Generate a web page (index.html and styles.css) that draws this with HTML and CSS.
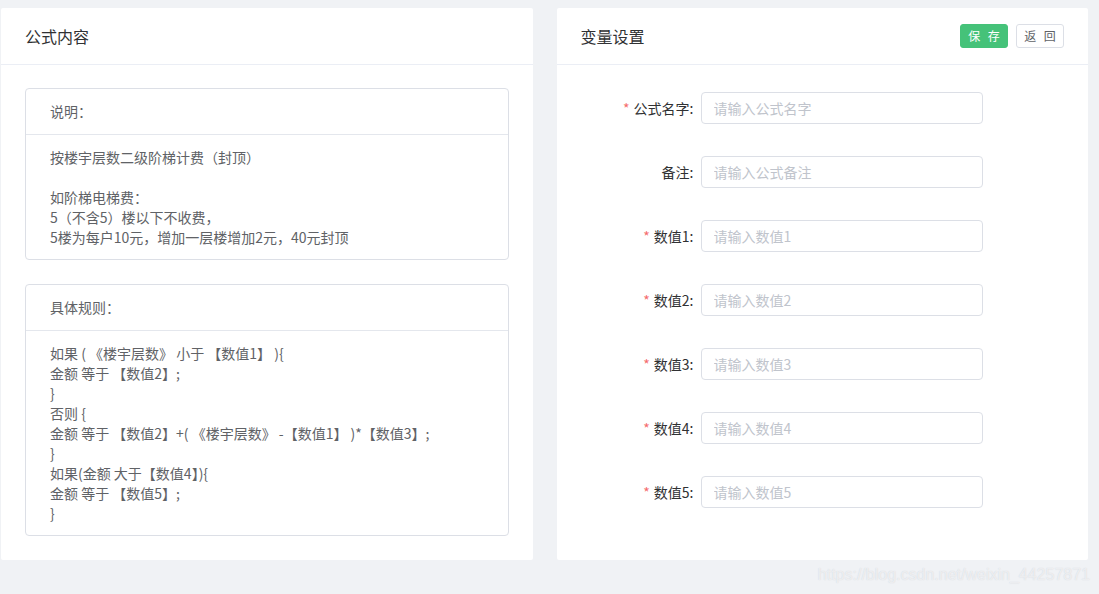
FILE: index.html
```html
<!DOCTYPE html>
<html lang="zh-CN">
<head>
<meta charset="utf-8">
<title>公式设置</title>
<link rel="stylesheet" href="styles.css">
</head>
<body>
<div class="page">
  <section class="card">
    <div class="card-header">
      <span class="card-title">公式内容</span>
    </div>
    <div class="card-body">
      <div class="box">
        <div class="box-header">说明：</div>
        <div class="box-body">
          <div class="line">按楼宇层数二级阶梯计费（封顶）</div>
          <div class="line blank"></div>
          <div class="line">如阶梯电梯费：</div>
          <div class="line">5（不含5）楼以下不收费，</div>
          <div class="line">5楼为每户10元，增加一层楼增加2元，40元封顶</div>
        </div>
      </div>
      <div class="box">
        <div class="box-header">具体规则：</div>
        <div class="box-body">
          <div class="line">如果 ( 《楼宇层数》 小于 【数值1】 ){</div>
          <div class="line">金额 等于 【数值2】;</div>
          <div class="line">}</div>
          <div class="line">否则 {</div>
          <div class="line">金额 等于 【数值2】+( 《楼宇层数》 -【数值1】 )*【数值3】;</div>
          <div class="line">}</div>
          <div class="line">如果(金额 大于【数值4】){</div>
          <div class="line">金额 等于 【数值5】;</div>
          <div class="line">}</div>
        </div>
      </div>
    </div>
  </section>

  <section class="card">
    <div class="card-header">
      <span class="card-title">变量设置</span>
      <div class="actions">
        <span class="btn btn-save">保 存</span>
        <span class="btn btn-back">返 回</span>
      </div>
    </div>
    <form class="form">
      <div class="form-item">
        <label class="label"><span class="star">*</span>公式名字:</label>
        <input class="input" type="text" placeholder="请输入公式名字">
      </div>
      <div class="form-item">
        <label class="label">备注:</label>
        <input class="input" type="text" placeholder="请输入公式备注">
      </div>
      <div class="form-item">
        <label class="label"><span class="star">*</span>数值1:</label>
        <input class="input" type="text" placeholder="请输入数值1">
      </div>
      <div class="form-item">
        <label class="label"><span class="star">*</span>数值2:</label>
        <input class="input" type="text" placeholder="请输入数值2">
      </div>
      <div class="form-item">
        <label class="label"><span class="star">*</span>数值3:</label>
        <input class="input" type="text" placeholder="请输入数值3">
      </div>
      <div class="form-item">
        <label class="label"><span class="star">*</span>数值4:</label>
        <input class="input" type="text" placeholder="请输入数值4">
      </div>
      <div class="form-item">
        <label class="label"><span class="star">*</span>数值5:</label>
        <input class="input" type="text" placeholder="请输入数值5">
      </div>
    </form>
  </section>
</div>
<div class="watermark">https://blog.csdn.net/weixin_44257871</div>
</body>
</html>
```

FILE: styles.css
```css
html, body {
  margin: 0;
  padding: 0;
}

body {
  background: #f0f2f5;
  font-family: "Noto Sans CJK SC", "Microsoft YaHei", sans-serif;
  font-size: 14px;
  color: #606266;
}

.page {
  display: grid;
  grid-template-columns: 1fr 1fr;
  column-gap: 24px;
  padding: 8px 11px 0 1px;
}

.card {
  background: #fff;
  border-radius: 2px;
}

.card-header {
  height: 56px;
  border-bottom: 1px solid #ebeef5;
  display: flex;
  align-items: center;
  justify-content: space-between;
  padding: 0 24px;
}

.card-title {
  font-size: 16px;
  line-height: 22px;
  color: #303133;
}

.card-body {
  padding: 23px 24px 24px;
  display: flex;
  flex-direction: column;
  gap: 24px;
}

.box {
  border: 1px solid #dcdfe6;
  border-radius: 4px;
}

.box-header {
  padding: 12px 24px 13px;
  line-height: 20px;
  font-size: 14px;
  color: #606266;
  border-bottom: 1px solid #e4e7ed;
}

.box-body {
  padding: 12px 24px;
  font-size: 14px;
  color: #606266;
}

.line {
  line-height: 20px;
  height: 20px;
  white-space: pre;
}

.actions {
  display: flex;
  gap: 8px;
}

.btn {
  display: inline-flex;
  align-items: center;
  justify-content: center;
  box-sizing: border-box;
  width: 48px;
  height: 24px;
  border-radius: 3px;
  font-size: 12px;
  line-height: 1;
  word-spacing: 5px;
  white-space: pre;
}

.btn-save {
  background: #45c279;
  border: 1px solid #45c279;
  color: #fff;
}

.btn-back {
  background: #fff;
  border: 1px solid #dcdfe6;
  color: #606266;
}

.form {
  padding: 27px 24px 0;
  margin: 0;
}

.form-item {
  display: flex;
  align-items: center;
  margin-bottom: 32px;
}

.label {
  width: 120px;
  box-sizing: border-box;
  padding-right: 7px;
  text-align: right;
  font-size: 14px;
  line-height: 20px;
  color: #303133;
}

.star {
  color: #f56c6c;
  margin-right: 4px;
}

.input {
  width: 282px;
  height: 32px;
  box-sizing: border-box;
  border: 1px solid #dcdfe6;
  border-radius: 4px;
  padding: 0 12px;
  font-family: inherit;
  font-size: 14px;
  color: #606266;
  background: #fff;
  outline: none;
}

.input::placeholder {
  color: #c0c4cc;
}

.watermark {
  margin-top: 5px;
  padding-right: 9px;
  text-align: right;
  font-family: "Liberation Sans", Arial, sans-serif;
  font-size: 16px;
  line-height: 20px;
  color: rgba(255, 255, 255, 0.6);
  text-shadow: 0 0 1px rgba(160, 165, 175, 0.45);
}
```
